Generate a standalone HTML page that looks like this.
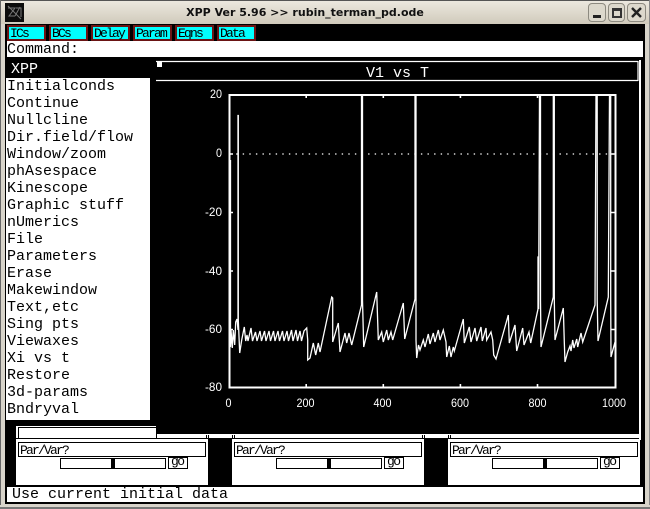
<!DOCTYPE html>
<html><head><meta charset="utf-8">
<style>
html,body{margin:0;padding:0;background:#d6d2c8}
#w{position:relative;width:650px;height:509px;overflow:hidden;background:#d8d4ca}
#w div{position:absolute}
.m{font:15px/17px "Liberation Mono",monospace;color:#000;white-space:pre}
.b{background:#0ff;border:2px solid #6b1414;box-sizing:border-box;height:16px;top:25px;width:39px;font:13px/14px "Liberation Mono",monospace;letter-spacing:-1.8px;color:#000;padding-left:1px;white-space:pre}
.p{background:#fff;top:439px;height:46px;width:192px}
.v{background:#fff;border:1px solid #000;box-sizing:border-box;top:442px;height:15px;width:188px;font:13px/15px "Liberation Mono",monospace;letter-spacing:-1.8px;padding-left:1px;color:#000;white-space:pre}
.s{background:#fff;border:1px solid #000;box-sizing:border-box;top:458px;height:11px;width:106px}
.t{background:#000;top:458px;height:11px;width:4px}
.g{background:#fff;border:1px solid #000;box-sizing:border-box;top:457px;height:12px;width:20px;font:13px/8px "Liberation Mono",monospace;letter-spacing:-1.5px;padding-left:2px;color:#000;white-space:pre}
.c{border:1px solid #8d8a80;border-radius:4px;box-sizing:border-box;top:3px;height:19px;background:#dcd8cc}
.n{background:#000;top:435px;width:1px;height:4px}
</style></head><body>
<div id="w">
<div style="left:0;top:0;width:650px;height:24px;background:linear-gradient(#ecE8df,#d0cabb);border-top:1px solid #555;box-sizing:border-box"></div>
<div style="left:0;top:0;width:1px;height:505px;background:#666"></div>
<div style="left:649px;top:0;width:1px;height:505px;background:#888"></div>
<div style="left:0;top:507px;width:650px;height:2px;background:#777"></div>
<div style="left:5px;top:3px;width:19px;height:19px;background:#0c0c0c"></div>
<svg style="position:absolute;left:5px;top:3px" width="19" height="19"><path d="M3 5H10L4 13H10M10 13L15 4M11 5L16 5L16 14M3 3L16 16" stroke="#777" stroke-width="1" fill="none"/></svg>
<div style="left:0;top:0;width:610px;height:24px;text-align:center;font:bold 11px/26px 'DejaVu Sans',sans-serif;color:#111">XPP Ver 5.96 &gt;&gt; rubin_terman_pd.ode</div>
<div class="c" style="left:588px;width:18px"></div>
<div class="c" style="left:608px;width:17px"></div>
<div class="c" style="left:627px;width:19px"></div>
<div style="left:593px;top:15px;width:8px;height:3px;background:#222"></div>
<div style="left:612px;top:8px;border:2px solid #333;border-top-width:3px;width:6px;height:5px"></div>
<svg style="position:absolute;left:627px;top:3px" width="19" height="19"><path d="M5 5L14 14M14 5L5 14" stroke="#222" stroke-width="2.4"/></svg>

<div style="left:5px;top:24px;width:640px;height:480px;background:#000"></div>

<div class="b" style="left:7px">ICs</div>
<div class="b" style="left:49px">BCs</div>
<div class="b" style="left:91px">Delay</div>
<div class="b" style="left:133px">Param</div>
<div class="b" style="left:175px">Eqns</div>
<div class="b" style="left:217px">Data</div>

<div class="m" style="left:7px;top:41px;width:636px;height:16px;background:#fff;line-height:17px">Command:</div>

<div class="m" style="left:11px;top:61px;color:#fff">XPP</div>
<div class="m" style="left:6px;top:78px;width:144px;height:342px;background:#fff;padding-left:1px;box-sizing:border-box">Initialconds
Continue
Nullcline
Dir.field/flow
Window/zoom
phAsespace
Kinescope
Graphic stuff
nUmerics
File
Parameters
Erase
Makewindow
Text,etc
Sing pts
Viewaxes
Xi vs t
Restore
3d-params
Bndryval</div>

<!-- bottom panels -->
<div style="left:16px;top:426px;width:142px;height:13px;background:#fff"></div>
<div style="left:18px;top:427px;width:139px;height:12px;border:1px solid #000;box-sizing:border-box;background:#fff"></div>
<div style="left:158px;top:434px;width:482px;height:5px;background:#fff"></div>
<div style="left:16px;top:438px;width:624px;height:1px;background:#000"></div>
<div class="n" style="left:206px"></div><div class="n" style="left:208px"></div><div class="n" style="left:232px"></div><div class="n" style="left:234px"></div>
<div class="n" style="left:422px"></div><div class="n" style="left:424px"></div><div class="n" style="left:448px"></div><div class="n" style="left:450px"></div>
<div style="left:208px;top:438px;width:24px;height:47px;background:#000"></div>
<div style="left:424px;top:438px;width:24px;height:47px;background:#000"></div>
<div class="p" style="left:16px"></div>
<div class="p" style="left:232px"></div>
<div class="p" style="left:448px"></div>
<div class="v" style="left:18px">Par/Var?</div>
<div class="v" style="left:234px">Par/Var?</div>
<div class="v" style="left:450px">Par/Var?</div>
<div class="s" style="left:60px"></div><div class="t" style="left:111px"></div><div class="g" style="left:168px">go</div>
<div class="s" style="left:276px"></div><div class="t" style="left:327px"></div><div class="g" style="left:384px">go</div>
<div class="s" style="left:492px"></div><div class="t" style="left:543px"></div><div class="g" style="left:600px">go</div>

<div class="m" style="left:7px;top:487px;width:636px;height:15px;background:#fff;padding-left:5px;box-sizing:border-box;line-height:16px">Use current initial data</div>

<!-- plot -->
<div style="left:639px;top:60px;width:1.5px;height:380px;background:#fff"></div>
<svg style="position:absolute;left:0;top:0" width="650" height="509">
<rect x="156" y="61" width="481.5" height="373" fill="#000"/>
<path d="M156 61.5H638M638 61V81M156 80.5H638" stroke="#fff" stroke-width="1.2" fill="none"/>
<rect x="157" y="62" width="5" height="5" fill="#fff"/>
<text x="366" y="77" font-family="Liberation Mono,monospace" font-size="15" fill="#fff">V1 vs T</text>
<path d="M229.5 95H615.5V387.5H229.5Z" fill="none" stroke="#fff" stroke-width="2"/>
<path d="M229.5 154H615" stroke="#fff" stroke-width="1.2" stroke-dasharray="1.4 5.2" fill="none"/>
<path d="M306.2 95v3M383.3 95v3M460.4 95v3M537.5 95v3M306.2 388v-4M383.3 388v-4M460.4 388v-4M537.5 388v-4M229 154h4M229 212.5h4M229 271h4M229 329.5h4M615 154h-4M615 212.5h-4M615 271h-4M615 329.5h-4" stroke="#fff" stroke-width="1.6"/>
<path d="M230.5 160V347L231 330L232.3 348L233.3 330L234.7 345L235.7 322L237 319L238 330V115.5H238.3V320L239.7 353L241.7 340L244.3 327L245.7 341L247 335L248 341L251 328L252.5 341L255.5 332L257 341L260 331L261.5 341L264.5 331L266 341L269 331L270.5 341L273.5 331L275 341L278 331L279.5 341L282.5 331L284 341L287 331L288.5 341L291.5 330L293 341L296 330L297.5 341L300 331L301.5 341L304 331L306.7 328L307.7 340V360L310 358L313.3 343L315.7 355L318.3 343L320 352L331.7 297L332.7 298V342L338.3 323L340 352L345 333L346.7 343L349 333L351.7 345L361.5 305V95H362.5V300L363.7 347L376.7 292L378.3 340L381.7 332L383.3 342L386.7 330L388.3 340L391 332L392.7 340L403.3 303L404.7 339L415 299V95H416V340L416.7 358L418.5 345L420 350L423.3 340L425 347L428.3 334L430 344L433.3 333L435 342L438.3 330L440 340L443.3 330L446 342L446.7 357L449.3 346L451 357L453.3 347L454.3 351L463.3 319L464.3 343L469.3 327L471 342L475 328L476.7 341L481 327L482.3 341L486 328L486.7 340L491 332L492.7 340L493.7 355L496 359L508.3 315L509.3 343L515 325L516.7 351L522.7 328L524 345L529 332L530.7 343L538 309V257H538.6V309L539.5 95H540.5V300L541 347L553.3 297V95H554.3V300L555 340L563.3 308L564.3 342L565 362L567.7 352L570 346L571 351L572.7 340L574 348L576.7 339L577.7 347L581 333L582.7 342L595 305L596 95H597.2V300L598 341L608.3 297L609.5 95H610.7V300L611 357L615 342" fill="none" stroke="#fff" stroke-width="1.3" stroke-linejoin="miter"/>
<g font-family="Liberation Sans,sans-serif" font-size="12" fill="#fff" text-anchor="end" lengthAdjust="spacingAndGlyphs">
<text x="222" y="98" textLength="12" lengthAdjust="spacingAndGlyphs">20</text><text x="222" y="157" textLength="6" lengthAdjust="spacingAndGlyphs">0</text><text x="222" y="216" textLength="17" lengthAdjust="spacingAndGlyphs">-20</text><text x="222" y="275" textLength="17" lengthAdjust="spacingAndGlyphs">-40</text><text x="222" y="333" textLength="17" lengthAdjust="spacingAndGlyphs">-60</text><text x="222" y="391" textLength="17" lengthAdjust="spacingAndGlyphs">-80</text>
</g>
<g font-family="Liberation Sans,sans-serif" font-size="12" fill="#fff" text-anchor="middle">
<text x="228.5" y="407" textLength="6" lengthAdjust="spacingAndGlyphs">0</text><text x="305.5" y="407" textLength="18" lengthAdjust="spacingAndGlyphs">200</text><text x="382.5" y="407" textLength="18" lengthAdjust="spacingAndGlyphs">400</text><text x="460" y="407" textLength="18" lengthAdjust="spacingAndGlyphs">600</text><text x="537.5" y="407" textLength="18" lengthAdjust="spacingAndGlyphs">800</text><text x="614" y="407" textLength="24" lengthAdjust="spacingAndGlyphs">1000</text>
</g>
</svg>
</div>
</body></html>
